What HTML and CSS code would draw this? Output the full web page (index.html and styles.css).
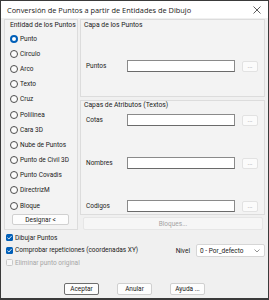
FILE: index.html
```html
<!DOCTYPE html>
<html lang="es">
<head>
    <meta charset="UTF-8">
    <title>Conversión de Puntos</title>
    <link rel="stylesheet" href="styles.css">
</head>
<body>
    <div class="window">
        <div class="titlebar">
            <span class="title">Conversión de Puntos a partir de Entidades de Dibujo</span>
            <svg class="close" width="8" height="8" viewBox="0 0 8 8">
                <path d="M0.5 0.5 L7.5 7.5 M7.5 0.5 L0.5 7.5" stroke="#333" stroke-width="0.8" fill="none"/>
            </svg>
        </div>

        <div class="content">
            <div class="top">
                <div class="group entities">
                    <div class="group-title">Entidad de los Puntos</div>
                    <ul class="radio-list">
                        <li><span class="radio checked"></span>Punto</li>
                        <li><span class="radio"></span>Circulo</li>
                        <li><span class="radio"></span>Arco</li>
                        <li><span class="radio"></span>Texto</li>
                        <li><span class="radio"></span>Cruz</li>
                        <li><span class="radio"></span>Polilinea</li>
                        <li><span class="radio"></span>Cara 3D</li>
                        <li><span class="radio"></span>Nube de Puntos</li>
                        <li><span class="radio"></span>Punto de Civil 3D</li>
                        <li><span class="radio"></span>Punto Covadis</li>
                        <li><span class="radio"></span>DirectrizM</li>
                        <li><span class="radio"></span>Bloque</li>
                    </ul>
                    <div class="btn designar">Designar &lt;</div>
                </div>

                <div class="layers">
                    <div class="group points">
                        <div class="group-title">Capa de los Puntos</div>
                        <div class="field first">
                            <span class="label">Puntos</span>
                            <span class="input"></span>
                            <span class="browse">...</span>
                        </div>
                    </div>

                    <div class="group attrs">
                        <div class="group-title">Capas de Atributos (Textos)</div>
                        <div class="field">
                            <span class="label">Cotas</span>
                            <span class="input"></span>
                            <span class="browse">...</span>
                        </div>
                        <div class="field">
                            <span class="label">Nombres</span>
                            <span class="input"></span>
                            <span class="browse">...</span>
                        </div>
                        <div class="field">
                            <span class="label">Codigos</span>
                            <span class="input"></span>
                            <span class="browse">...</span>
                        </div>
                    </div>

                    <div class="bloques">Bloques...</div>
                </div>
            </div>

            <div class="options">
                <div class="checks">
                    <div class="check-row"><span class="checkbox checked"></span>Dibujar Puntos</div>
                    <div class="check-row"><span class="checkbox checked"></span>Comprobar repeticiones (coordenadas XY)</div>
                    <div class="check-row disabled"><span class="checkbox"></span>Eliminar punto original</div>
                </div>
                <div class="level">
                    <span class="level-label">Nivel</span>
                    <div class="select">
                        <span>0 - Por_defecto</span>
                        <svg width="6" height="4" viewBox="0 0 6 4">
                            <path d="M0.5 0.5 L3 3 L5.5 0.5" stroke="#666" stroke-width="0.7" fill="none"/>
                        </svg>
                    </div>
                </div>
            </div>

            <div class="actions">
                <div class="btn default">Aceptar</div>
                <div class="btn">Anular</div>
                <div class="btn">Ayuda ...</div>
            </div>
        </div>
    </div>
</body>
</html>
```

FILE: styles.css
```css
body {
    margin: 0;
    padding: 0;
    background: #ffffff;
    font-family: Roboto, "Open Sans", sans-serif;
    font-size: 6.5px;
    color: #1b1b1b;
}

.window {
    width: 269px;
    height: 300px;
    box-sizing: border-box;
    border: 1px solid #3a3a3a;
    border-bottom-width: 2px;
    background: #f0f0f0;
    display: flex;
    flex-direction: column;
}

.titlebar {
    height: 17px;
    background: #ffffff;
    display: flex;
    align-items: center;
    justify-content: space-between;
    padding: 0 6px 0 6px;
}

.title {
    font-family: "Open Sans", sans-serif;
    font-size: 7.4px;
    color: #1a1a1a;
}

.close {
    margin-right: 1px;
}

.content {
    padding: 1px 3px 0 3px;
}

.top {
    display: flex;
    gap: 2px;
}

.group {
    border: 1px solid #dcdcdc;
    background: #f3f3f3;
}

.group-title {
    line-height: 9px;
    height: 9px;
    font-size: 6.8px;
}

/* Entidad de los Puntos */
.entities {
    width: 74px;
    height: 211px;
    box-sizing: border-box;
    padding: 1px 0 0 5px;
}

.radio-list {
    list-style: none;
    margin: 1px 0 0 0;
    padding: 0;
}

.radio-list li {
    height: 15.2px;
    display: flex;
    align-items: center;
    gap: 2px;
}

.radio {
    width: 8px;
    height: 8px;
    box-sizing: border-box;
    border: 1px solid #4d4d4d;
    border-radius: 50%;
    background: #fbfbfb;
}

.radio.checked {
    border: 2.4px solid #005fb8;
    background: #ffffff;
}

.btn {
    height: 12px;
    box-sizing: border-box;
    border: 1px solid #d0d0d0;
    border-radius: 2px;
    background: #fdfdfd;
    display: flex;
    align-items: center;
    justify-content: center;
}

.designar {
    width: 57px;
    height: 11px;
    margin: 1px 0 0 2px;
}

/* Capas */
.layers {
    width: 185px;
    display: flex;
    flex-direction: column;
}

.points {
    height: 78px;
    box-sizing: border-box;
    padding: 1px 0 0 3px;
}

.attrs {
    margin-top: 3px;
    height: 115px;
    box-sizing: border-box;
    padding: 0 0 0 3px;
}

.field {
    display: flex;
    align-items: center;
    height: 12px;
    padding-left: 2px;
    margin-top: 31px;
}

.field.first {
    margin-top: 30px;
}

.attrs .group-title + .field {
    margin-top: 4px;
}

.label {
    width: 41px;
}

.input {
    width: 108px;
    height: 12px;
    box-sizing: border-box;
    background: #ffffff;
    border: 1px solid #8a8a8a;
    border-bottom-color: #6a6a6a;
}

.browse {
    width: 16px;
    height: 11px;
    box-sizing: border-box;
    margin-left: 7px;
    border: 1px solid #e2e2e2;
    border-radius: 2px;
    background: #fbfbfb;
    color: #a8a8a8;
    display: flex;
    align-items: center;
    justify-content: center;
    line-height: 1;
}

.bloques {
    margin: 2px 2px 0 3px;
    height: 11px;
    border: 1px solid #e6e6e6;
    border-radius: 2px;
    background: #f6f6f6;
    color: #a3a3a3;
    display: flex;
    align-items: center;
    justify-content: center;
}

/* Opciones */
.options {
    display: flex;
    margin-top: 1.5px;
}

.checks {
    flex: 1;
}

.check-row {
    height: 12.5px;
    display: flex;
    align-items: center;
    gap: 2px;
    padding-left: 2px;
}

.checkbox {
    width: 7px;
    height: 7px;
    box-sizing: border-box;
    border: 1px solid #c8c8c8;
    border-radius: 1.5px;
    background: #f7f7f7;
}

.checkbox.checked {
    border: none;
    background: #005fb8 url("data:image/svg+xml,%3Csvg xmlns='http://www.w3.org/2000/svg' viewBox='0 0 7 7'%3E%3Cpath d='M1.4 3.6 L2.9 5 L5.7 1.9' stroke='white' stroke-width='0.9' fill='none'/%3E%3C/svg%3E") no-repeat center / 7px 7px;
}

.check-row.disabled {
    color: #a6a6a6;
}

.level {
    display: flex;
    align-items: center;
    margin-top: 12.5px;
    height: 13px;
}

.level-label {
    margin-right: 6px;
}

.select {
    width: 69px;
    height: 13px;
    box-sizing: border-box;
    border: 1px solid #d6d6d6;
    border-radius: 2px;
    background: #ffffff;
    display: flex;
    align-items: center;
    justify-content: space-between;
    padding: 0 4px 0 3px;
}

/* Botones */
.actions {
    display: flex;
    justify-content: center;
    gap: 18px;
    margin-top: 14px;
}

.actions .btn {
    width: 35px;
}

.actions .btn.default {
    border-color: #6e6e6e;
}
```
